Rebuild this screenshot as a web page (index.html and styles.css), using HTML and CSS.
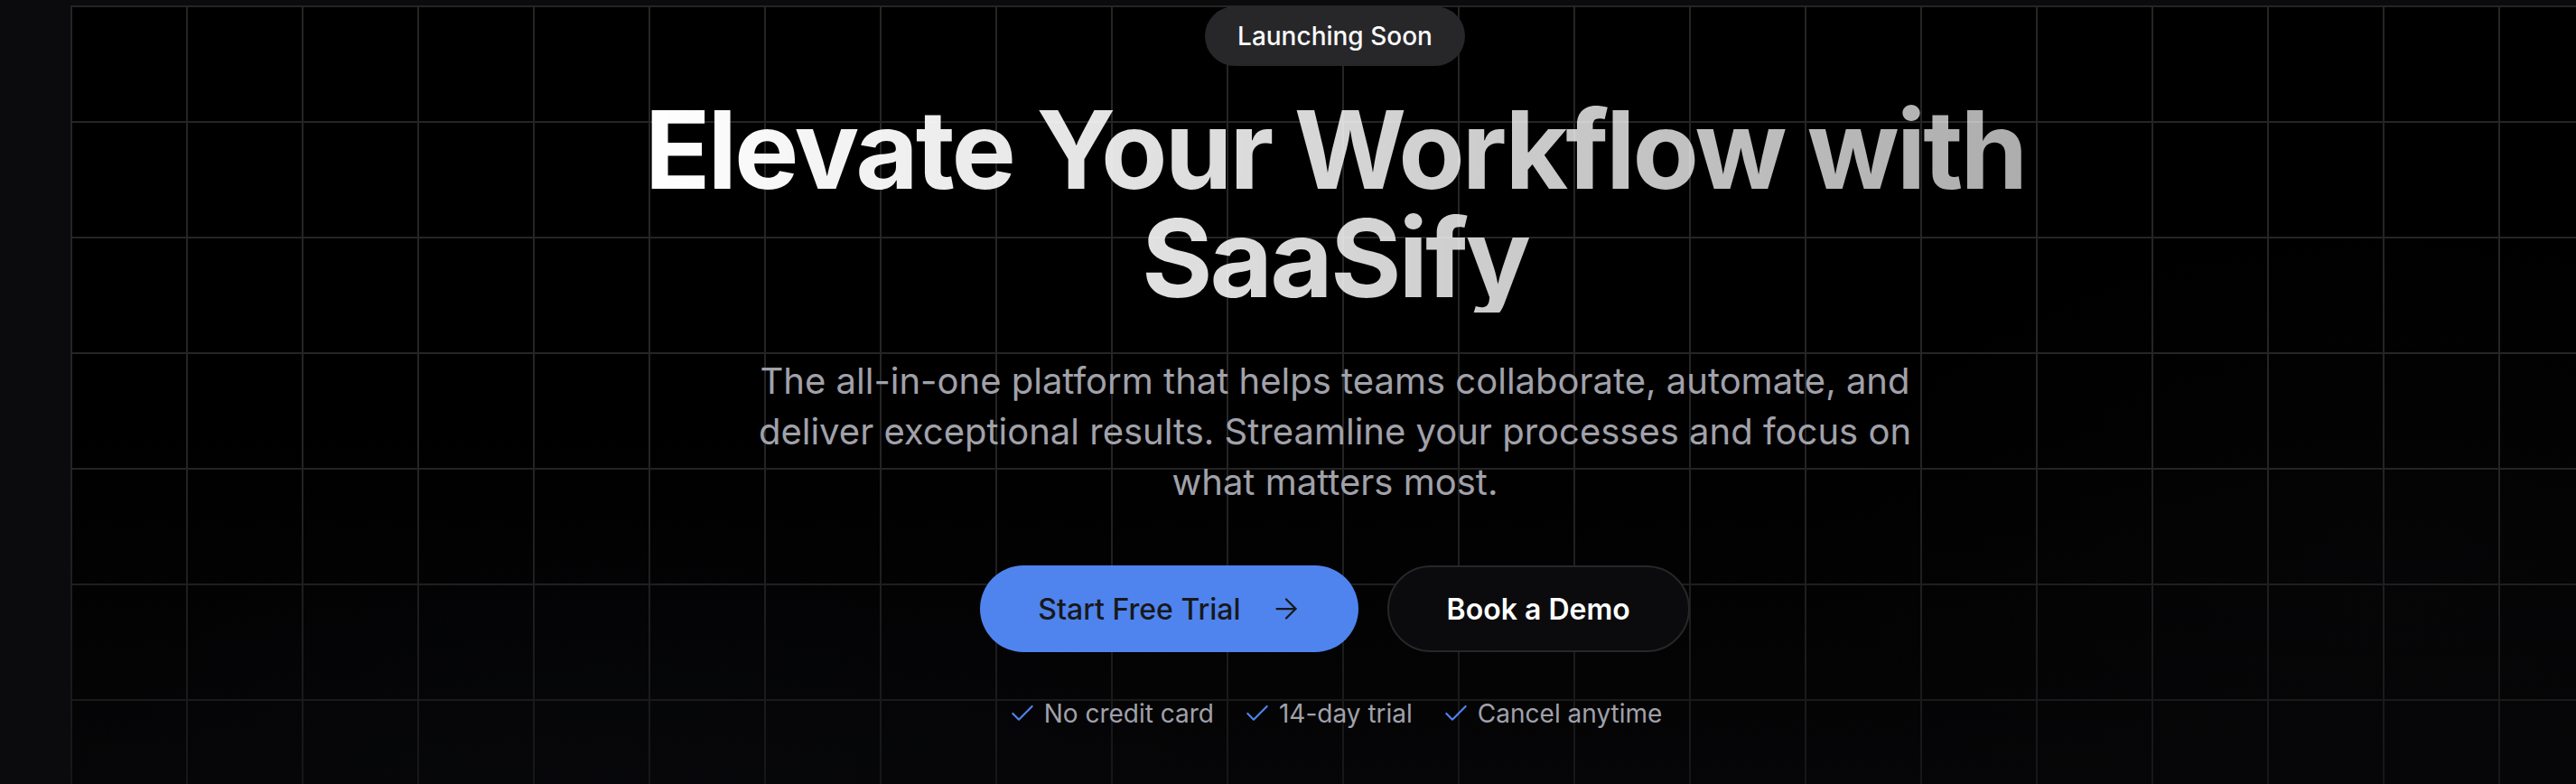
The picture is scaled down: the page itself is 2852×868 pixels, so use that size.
FILE: index.html
```html
<!DOCTYPE html>
<html lang="en">
<head>
<meta charset="utf-8">
<title>SaaSify</title>
<link rel="stylesheet" href="styles.css">
</head>
<body>
<main class="page">
  <section class="hero">
    <div class="hero-content">
      <span class="badge">Launching Soon</span>
      <h1 class="title"><span class="title-line">Elevate Your Workflow with</span><span class="title-line">SaaSify</span></h1>
      <p class="lead">The all-in-one platform that helps teams collaborate, automate, and deliver exceptional results. Streamline your processes and focus on what matters most.</p>
      <div class="actions">
        <a class="btn btn-primary" href="#">
          <span>Start Free Trial</span>
          <svg class="btn-icon" viewBox="0 0 24 24" fill="none" stroke="currentColor" stroke-width="1.5" stroke-linecap="round" stroke-linejoin="round"><path d="M5 12h14"/><path d="m12 5 7 7-7 7"/></svg>
        </a>
        <a class="btn btn-secondary" href="#">Book a Demo</a>
      </div>
      <ul class="perks">
        <li class="perk"><svg class="perk-icon" viewBox="0 0 24 24" fill="none" stroke="currentColor" stroke-width="1.6" stroke-linecap="round" stroke-linejoin="round"><path d="M20 6 9 17l-5-5"/></svg><span>No credit card</span></li>
        <li class="perk"><svg class="perk-icon" viewBox="0 0 24 24" fill="none" stroke="currentColor" stroke-width="1.6" stroke-linecap="round" stroke-linejoin="round"><path d="M20 6 9 17l-5-5"/></svg><span>14-day trial</span></li>
        <li class="perk"><svg class="perk-icon" viewBox="0 0 24 24" fill="none" stroke="currentColor" stroke-width="1.6" stroke-linecap="round" stroke-linejoin="round"><path d="M20 6 9 17l-5-5"/></svg><span>Cancel anytime</span></li>
      </ul>
    </div>
  </section>
</main>
</body>
</html>
```

FILE: styles.css
```css
* { box-sizing: border-box; }

html, body {
  margin: 0;
  padding: 0;
  background: #0b0b0d;
  overflow: hidden;
}

body {
  font-family: Inter, "Noto Sans", "Liberation Sans", sans-serif;
  color: #fafafa;
  width: 2852px;
  height: 868px;
}

.page {
  padding: 6px 0 0 78px;
  height: 868px;
}

.hero {
  width: 2800px;
  height: 862px;
  background-color: #000;
  background-image:
    linear-gradient(to bottom, rgba(0,0,0,0) 55%, rgba(10,10,13,0.55) 100%),
    radial-gradient(ellipse 900px 420px at 22% 100%, rgba(30,40,70,0.10), rgba(0,0,0,0) 70%),
    radial-gradient(ellipse 900px 500px at 92% 70%, rgba(40,40,50,0.10), rgba(0,0,0,0) 70%),
    linear-gradient(to right, #252525 2px, transparent 2px),
    linear-gradient(to bottom, #252525 2px, transparent 2px);
  background-size: auto, auto, auto, 128px 128px, 128px 128px;
}

.hero-content {
  display: flex;
  flex-direction: column;
  align-items: center;
  padding-top: 1px;
  text-align: center;
}

.badge {
  display: inline-block;
  background: #27272a;
  color: #fafafa;
  font-size: 28px;
  font-weight: 500;
  line-height: 40px;
  padding: 13px 36px;
  border-radius: 999px;
}

.title {
  display: inline-flex;
  flex-direction: column;
  align-items: center;
  margin: 33px 0 0;
  font-size: 120px;
  line-height: 120px;
  font-weight: 700;
  letter-spacing: -3px;
  background: linear-gradient(to right, #ffffff 0%, rgba(255,255,255,0.68) 100%);
  -webkit-background-clip: text;
  background-clip: text;
  color: transparent;
}

.title-line {
  display: block;
  height: 120px;
  white-space: nowrap;
}

.lead {
  margin: 48px 0 0;
  max-width: 1344px;
  font-size: 40px;
  line-height: 56px;
  color: #a1a1aa;
}

.actions {
  display: flex;
  gap: 32px;
  margin-top: 64px;
}

.btn {
  display: inline-flex;
  align-items: center;
  justify-content: center;
  height: 96px;
  border-radius: 999px;
  font-size: 32px;
  text-decoration: none;
}

.btn-primary {
  background: #4f84ee;
  color: #18181b;
  font-weight: 500;
  padding: 0 62px 0 64px;
  gap: 32px;
}

.btn-icon {
  width: 36px;
  height: 36px;
}

.btn-secondary {
  background: #0b0b0d;
  color: #ffffff;
  font-weight: 600;
  border: 2px solid #27272a;
  padding: 0 64px;
}

.perks {
  display: flex;
  gap: 32px;
  margin: 48px 0 0;
  padding: 0;
  list-style: none;
}

.perk {
  display: flex;
  align-items: center;
  gap: 8px;
  font-size: 28px;
  line-height: 40px;
  color: #a1a1aa;
}

.perk-icon {
  width: 32px;
  height: 32px;
  color: #4f84ee;
}
```
